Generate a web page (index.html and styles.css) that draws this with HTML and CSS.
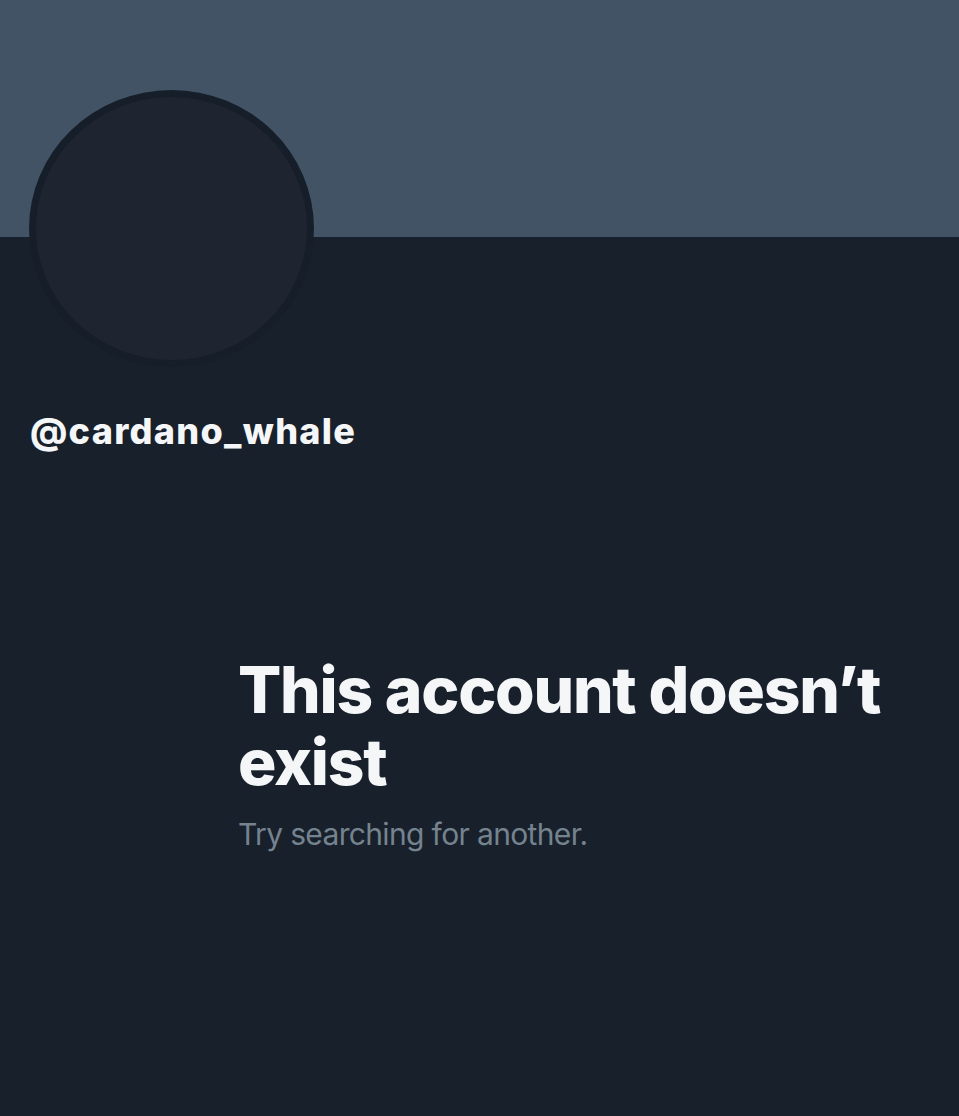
FILE: index.html
```html
<!DOCTYPE html>
<html lang="en">
<head>
    <meta charset="UTF-8">
    <meta name="viewport" content="width=device-width, initial-scale=1.0">
    <title>@cardano_whale</title>
    <link rel="stylesheet" href="styles.css">
</head>
<body>
    <div class="profile">
        <div class="banner"></div>
        <div class="avatar-row">
            <div class="avatar"></div>
        </div>
        <div class="handle">@cardano_whale</div>

        <div class="empty-state">
            <h1>This account doesn’t exist</h1>
            <p>Try searching for another.</p>
        </div>
    </div>
</body>
</html>
```

FILE: styles.css
```css
html, body { margin: 0; padding: 0; }
body { background: #18202b; font-family: Inter, "Noto Sans", sans-serif; color: #f4f6f8; }
.profile { width: 959px; height: 1116px; overflow: hidden; }
.banner { height: 237px; background: #435366; }
.avatar-row { display: flex; height: 131px; padding-left: 29px; }
.avatar { flex: none; width: 271px; height: 263px; margin-top: -147px; border: 7px solid #161e29; border-radius: 50%; background: #1f2530; }
.handle { margin: 42px 0 0 30px; font-size: 36px; font-weight: 800; letter-spacing: 1.3px; line-height: 42px; }
.empty-state { margin: 202px 0 0 238px; width: 680px; }
.empty-state h1 { margin: 0; font-size: 64px; font-weight: 800; line-height: 72px; letter-spacing: -1.2px; }
.empty-state p { margin: 18px 0 0; font-size: 30px; color: #75838f; line-height: 36px; letter-spacing: -0.65px; }
```
